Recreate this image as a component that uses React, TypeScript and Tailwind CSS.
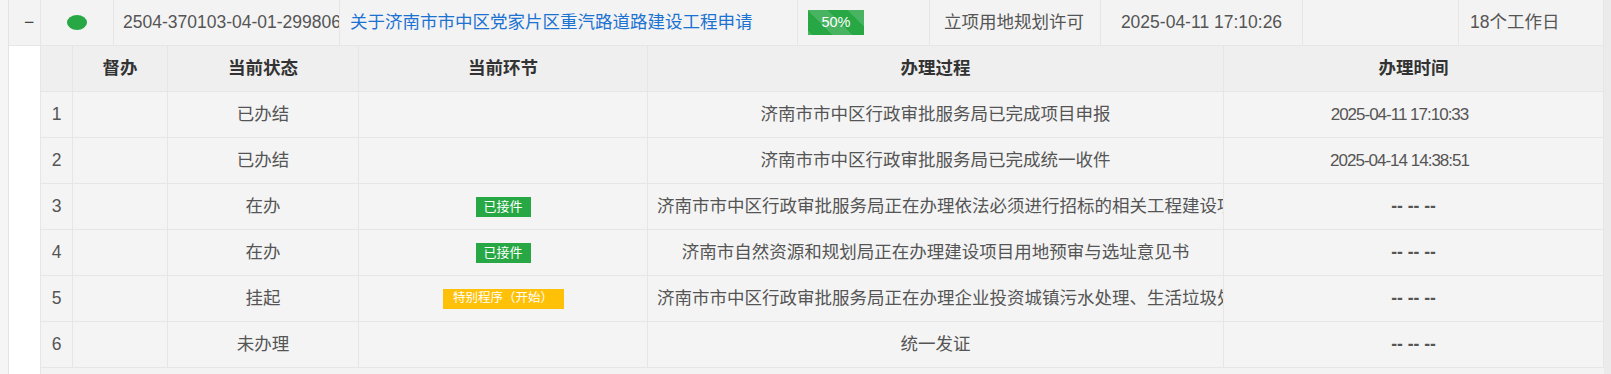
import React from "react";

type Step = {
  no: number;
  status: string;
  tag?: { text: string; kind: "green" | "yellow" };
  process: string;
  time: string;
};

const steps: Step[] = [
  { no: 1, status: "已办结", process: "济南市市中区行政审批服务局已完成项目申报", time: "2025-04-11 17:10:33" },
  { no: 2, status: "已办结", process: "济南市市中区行政审批服务局已完成统一收件", time: "2025-04-14 14:38:51" },
  {
    no: 3,
    status: "在办",
    tag: { text: "已接件", kind: "green" },
    process: "济南市市中区行政审批服务局正在办理依法必须进行招标的相关工程建设项目招标方案核准",
    time: "-- -- --",
  },
  {
    no: 4,
    status: "在办",
    tag: { text: "已接件", kind: "green" },
    process: "济南市自然资源和规划局正在办理建设项目用地预审与选址意见书",
    time: "-- -- --",
  },
  {
    no: 5,
    status: "挂起",
    tag: { text: "特别程序（开始）", kind: "yellow" },
    process: "济南市市中区行政审批服务局正在办理企业投资城镇污水处理、生活垃圾处理项目核准",
    time: "-- -- --",
  },
  { no: 6, status: "未办理", process: "统一发证", time: "-- -- --" },
];

const cell = "flex items-center h-full border-r border-[#e6e6e6] overflow-hidden whitespace-nowrap";

function StepRow({ step }: { step: Step }) {
  const empty = step.time.startsWith("--");
  return (
    <div className="flex h-[46px] border-b border-[#e6e6e6] bg-[#f4f4f4] text-[17.5px] text-[#555]">
      <div className={`${cell} w-[32px] justify-center`}>{step.no}</div>
      <div className={`${cell} w-[95px]`} />
      <div className={`${cell} w-[191px] justify-center`}>{step.status}</div>
      <div className={`${cell} w-[289px] justify-center`}>
        {step.tag && (
          <span
            className={
              step.tag.kind === "green"
                ? "flex items-center justify-center w-[55px] h-[20px] bg-[#28a745] text-white text-[13px]"
                : "flex items-center justify-center w-[121px] h-[20px] bg-[#ffc107] text-white text-[12.5px]"
            }
          >
            {step.tag.text}
          </span>
        )}
      </div>
      <div className="w-[576px] h-full px-[9px] border-r border-[#e6e6e6] overflow-hidden whitespace-nowrap text-center leading-[45px]">
        {step.process}
      </div>
      <div
        className={
          empty
            ? `${cell} w-[380px] justify-center text-[17.5px] font-bold`
            : `${cell} w-[380px] justify-center pr-[28px] text-[17px] tracking-[-1px]`
        }
      >
        {step.time}
      </div>
    </div>
  );
}

export default function App() {
  return (
    <div className="flex w-[1611px] h-[374px] bg-[#f5f5f5] font-['Liberation_Sans','Noto_Sans_CJK_SC',sans-serif] overflow-hidden">
      <div className="w-[8px]" />
      <div className="w-[1596px] flex flex-col border-l border-[#e3e3e3]">
        {/* main record row */}
        <div className="flex h-[46px] shrink-0 border-b border-[#e6e6e6] bg-[#f3f3f3] text-[17.5px] text-[#555]">
          <div className={`${cell} w-[32px] pl-[15px] text-[#444]`}>−</div>
          <div className={`${cell} w-[73px] justify-center`}>
            <span className="w-[20px] h-[15px] rounded-[50%] bg-[#28a745]" />
          </div>
          <div className={`${cell} w-[226px] pl-[9px]`}>2504-370103-04-01-299806</div>
          <div className={`${cell} w-[458px] pl-[10px] text-[#1c72d1]`}>关于济南市市中区党家片区重汽路道路建设工程申请</div>
          <div className={`${cell} w-[132px] pl-[10px]`}>
            <span className="flex items-center justify-center w-[56px] h-[25px] bg-[#28a745] bg-[linear-gradient(45deg,rgba(255,255,255,.15)_25%,transparent_25%,transparent_50%,rgba(255,255,255,.15)_50%,rgba(255,255,255,.15)_75%,transparent_75%,transparent)] bg-[length:40px_40px] text-white text-[14.5px]">
              50%
            </span>
          </div>
          <div className={`${cell} w-[171px] pl-[14px]`}>立项用地规划许可</div>
          <div className={`${cell} w-[202px] justify-center`}>2025-04-11 17:10:26</div>
          <div className={`${cell} w-[156px]`} />
          <div className={`${cell} w-[145px] pl-[11px]`}>18个工作日</div>
        </div>

        {/* expanded detail */}
        <div className="flex flex-1">
          <div className="w-[31px] bg-white" />
          <div className="flex-1 flex flex-col border-l border-[#e6e6e6] bg-[#f3f3f3]">
            <div className="flex h-[46px] border-b border-[#e6e6e6] bg-[#efefef] text-[17.5px] font-bold text-[#333]">
              <div className={`${cell} w-[32px]`} />
              <div className={`${cell} w-[95px] justify-center`}>督办</div>
              <div className={`${cell} w-[191px] justify-center`}>当前状态</div>
              <div className={`${cell} w-[289px] justify-center`}>当前环节</div>
              <div className={`${cell} w-[576px] justify-center`}>办理过程</div>
              <div className={`${cell} w-[380px] justify-center`}>办理时间</div>
            </div>
            {steps.map((s) => (
              <StepRow key={s.no} step={s} />
            ))}
          </div>
        </div>
      </div>
      <div className="w-[7px] bg-[#ebebeb]" />
    </div>
  );
}
